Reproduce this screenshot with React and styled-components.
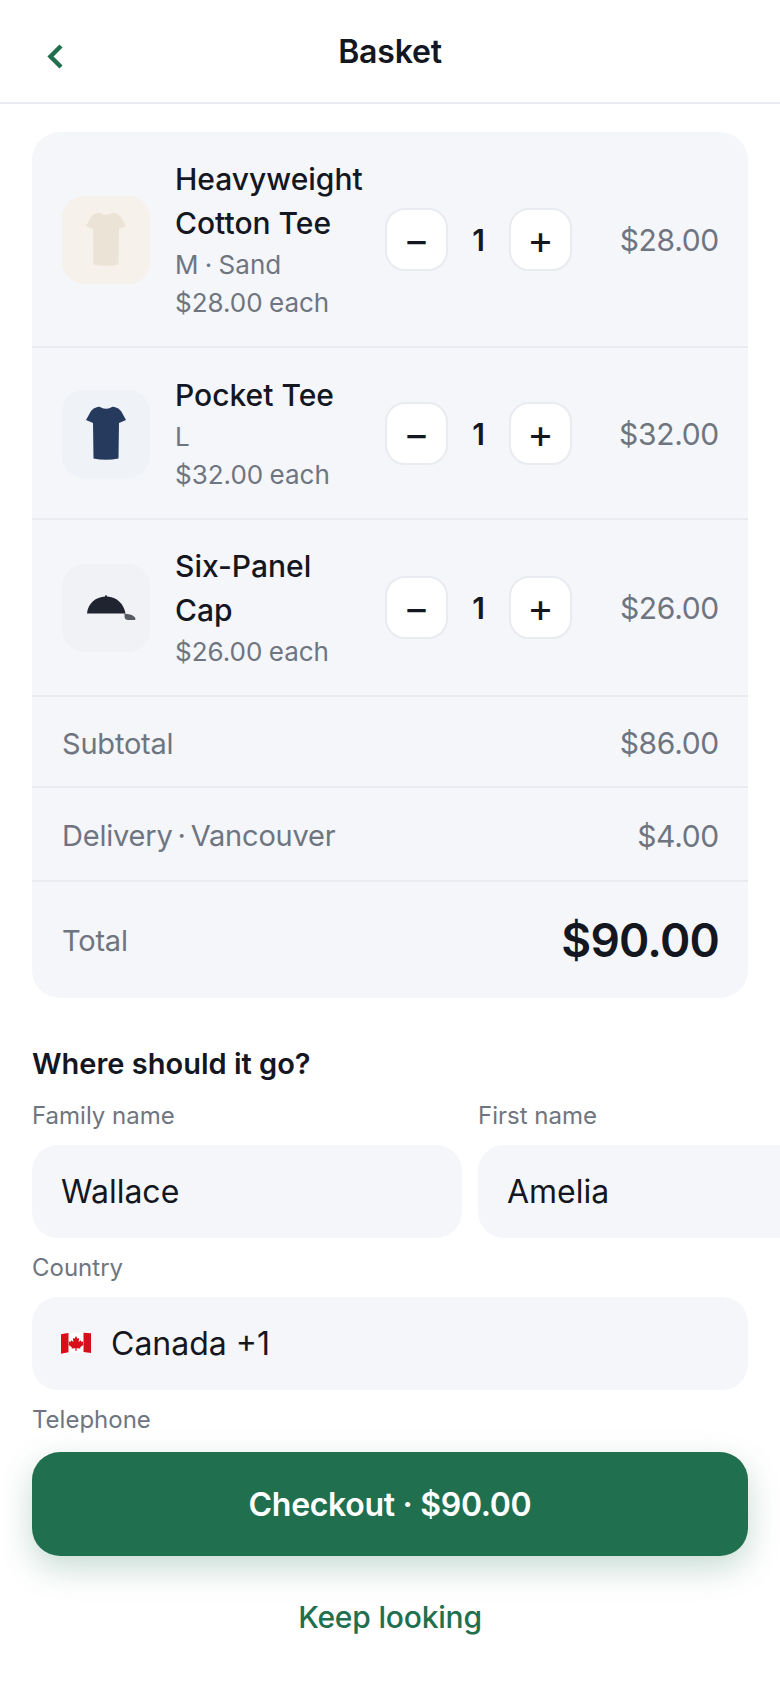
import React from 'react';
import styled, { createGlobalStyle } from 'styled-components';

const GlobalStyle = createGlobalStyle`
  * { box-sizing: border-box; }
  html, body { margin: 0; padding: 0; background: #fff; }
  body { font-family: Inter, "Liberation Sans", sans-serif; color: #14171f; }
`;

const GREEN = '#20704f';
const GRAY = '#6f7580';
const LINE = '#e8ebef';

const Screen = styled.div`
  position: relative;
  width: 780px;
  height: 1688px;
  overflow: hidden;
  background: #fff;
`;

const Header = styled.header`
  position: relative;
  height: 104px;
  padding-top: 2px;
  display: flex;
  align-items: center;
  justify-content: center;
  border-bottom: 2px solid ${LINE};
`;

const BackButton = styled.button`
  position: absolute;
  left: 45px;
  top: 41px;
  width: 20px;
  height: 30px;
  padding: 0;
  border: none;
  background: none;
  color: ${GREEN};
`;

const Title = styled.h1`
  margin: 0;
  font-size: 32px;
  line-height: 40px;
  letter-spacing: -0.2px;
  font-weight: 600;
`;

const Main = styled.main`
  padding: 28px 32px 0;
`;

const Card = styled.section`
  background: #f4f6fa;
  border-radius: 28px;
`;

const ItemRow = styled.div`
  display: flex;
  align-items: center;
  padding: 25px 29px 24px 30px;
  border-bottom: 2px solid ${LINE};

  &:nth-child(3) {
    padding-top: 24px;
  }
`;

const Thumb = styled.div`
  flex: none;
  width: 88px;
  height: 88px;
  border-radius: 22px;
  display: flex;
  align-items: center;
  justify-content: center;
  background: ${(p) => p.$bg};
`;

const Info = styled.div`
  flex: none;
  width: 196px;
  margin-left: 25px;
`;

const Name = styled.div`
  margin-bottom: 1px;
  font-size: 30px;
  line-height: 44px;
  font-weight: 500;
`;

const Meta = styled.div`
  font-size: 26px;
  line-height: 38px;
  word-spacing: -1px;
  color: ${GRAY};
`;

const Stepper = styled.div`
  flex: none;
  display: flex;
  align-items: center;
  margin-left: 14px;
`;

const StepButton = styled.button`
  width: 63px;
  height: 63px;
  padding: 0;
  border: 2px solid ${LINE};
  border-radius: 20px;
  background: #fff;
  color: #14171f;
  font-family: inherit;
  font-size: 40px;
  font-weight: 400;
  line-height: 1;
`;

const Qty = styled.span`
  width: 61px;
  text-align: center;
  font-size: 30px;
  font-weight: 600;
`;

const Amount = styled.span`
  font-size: 30px;
  letter-spacing: -0.3px;
  color: ${GRAY};
`;

const LinePrice = styled(Amount)`
  flex: 1;
  text-align: right;
`;

const SummaryRow = styled.div`
  display: flex;
  align-items: center;
  justify-content: space-between;
  padding: ${(p) => (p.$last ? 0 : 3)}px 29px 0 30px;
  height: ${(p) => p.$h}px;
  font-size: 29px;
  letter-spacing: -0.2px;
  word-spacing: -3px;
  color: ${GRAY};
  border-bottom: ${(p) => (p.$last ? 'none' : `2px solid ${LINE}`)};
`;

const TotalValue = styled.span`
  font-size: 46px;
  letter-spacing: -0.8px;
  font-weight: 600;
  color: #14171f;
`;

const SectionTitle = styled.h2`
  margin: 44px 0 0;
  font-size: 29px;
  line-height: 44px;
  font-weight: 600;
`;

const FieldRow = styled.div`
  display: grid;
  grid-template-columns: 430px 430px;
  gap: 16px;
`;

const Field = styled.div`
  margin-top: 12px;
`;

const FieldLabel = styled.label`
  display: block;
  font-size: 24px;
  line-height: 36px;
  color: ${GRAY};
`;

const InputShell = styled.div`
  display: flex;
  align-items: center;
  gap: 20px;
  height: 93px;
  margin-top: 11px;
  padding: 0 29px;
  border-radius: 26px;
  background: #f4f6fa;
`;

const TextInput = styled.input`
  flex: 1;
  min-width: 0;
  width: 100%;
  padding: 0;
  border: none;
  outline: none;
  background: none;
  font-family: inherit;
  font-size: 32px;
  color: #14171f;
`;

const Footer = styled.footer`
  position: absolute;
  left: 0;
  right: 0;
  bottom: 0;
  padding: 22px 32px 0;
  height: 258px;
  background: linear-gradient(to bottom, rgba(255, 255, 255, 0), #fff 20px);
`;

const CheckoutButton = styled.button`
  display: block;
  width: 716px;
  height: 104px;
  padding: 0;
  border: none;
  border-radius: 28px;
  background: ${GREEN};
  color: #fff;
  font-family: inherit;
  font-size: 32px;
  letter-spacing: -0.3px;
  font-weight: 600;
  box-shadow: 0 12px 32px rgba(31, 111, 78, 0.25);
`;

const KeepLooking = styled.button`
  display: block;
  width: 100%;
  margin-top: 39px;
  padding: 0;
  border: none;
  background: none;
  color: ${GREEN};
  font-family: inherit;
  font-size: 30px;
  letter-spacing: -0.2px;
  line-height: 44px;
  font-weight: 500;
`;

const Chevron = () => (
  <svg width="20" height="30" viewBox="0 0 20 30" fill="none">
    <path d="M16 5 L5.5 15.5 L16 26" stroke="currentColor" strokeWidth="4.4" strokeLinejoin="miter" />
  </svg>
);

const Tee = ({ color }) => (
  <svg width="40" height="55" viewBox="0 0 40 55">
    <path
      fill={color}
      d="M11.5 1 Q14 0.5 15 1.5 Q20 4 25 1.5 Q26 0.5 28.5 1 Q33 2 35 5 L40 14 L33 17 L32.5 52.5 Q20 55 7.5 52.5 L7 17 L0 14 L5 5 Q7 2 11.5 1 Z"
    />
  </svg>
);

const Cap = () => (
  <svg width="60" height="25" viewBox="-11 0 60 25">
    <path fill="#1f2430" d="M0 18.5 C1 8 9 2 18 1.5 L18 0.5 L20 0.5 L20 1.5 C30 2 37 9 38.5 18.5 Z" />
    <path fill="#565b64" d="M37.5 18.5 L43 19.5 Q48 21 48.5 24 L48 25 L41 25 Q37.5 25 37.5 21 Z" />
  </svg>
);

const CanadaFlag = () => (
  <svg width="30" height="23" viewBox="0 0 32 24">
    <path fill="#fff" d="M0 2 Q16 -1 32 1 V22 Q16 20 0 23 Z" />
    <path fill="#d80f1a" d="M0 2 Q4 1.2 8 .8 V21.2 Q4 21.8 0 23 Z" />
    <path fill="#d80f1a" d="M24 .4 Q28 .5 32 1 V22 Q28 21.4 24 21 Z" />
    <path
      fill="#d80f1a"
      d="M16 4 L17.6 7 L19.4 6.2 L18.8 10.4 L21 8.6 L21.6 10.2 L24 9.8 L23.2 12.6 L24.2 13.2 L20.4 16 L20.8 17.4 L16.6 17 L16.6 20 L15.4 20 L15.4 17 L11.2 17.4 L11.6 16 L7.8 13.2 L8.8 12.6 L8 9.8 L10.4 10.2 L11 8.6 L13.2 10.4 L12.6 6.2 L14.4 7 Z"
    />
  </svg>
);

const items = [
  { name: 'Heavyweight Cotton Tee', meta: ['M · Sand', '$28.00 each'], price: '$28.00', bg: '#f6f1ea', art: <Tee color="#ebe3d5" /> },
  { name: 'Pocket Tee', meta: ['L', '$32.00 each'], price: '$32.00', bg: '#eff2f6', art: <Tee color="#263a5e" /> },
  { name: 'Six-Panel Cap', meta: ['$26.00 each'], price: '$26.00', bg: '#f0f2f5', art: <Cap /> },
];

export default function App() {
  return (
    <Screen>
      <GlobalStyle />
      <Header>
        <BackButton aria-label="Back"><Chevron /></BackButton>
        <Title>Basket</Title>
      </Header>
      <Main>
        <Card>
          {items.map((item) => (
            <ItemRow key={item.name}>
              <Thumb $bg={item.bg}>{item.art}</Thumb>
              <Info>
                <Name>{item.name}</Name>
                {item.meta.map((m) => <Meta key={m}>{m}</Meta>)}
              </Info>
              <Stepper>
                <StepButton>−</StepButton>
                <Qty>1</Qty>
                <StepButton>+</StepButton>
              </Stepper>
              <LinePrice>{item.price}</LinePrice>
            </ItemRow>
          ))}
          <SummaryRow $h={91}><span>Subtotal</span><Amount>$86.00</Amount></SummaryRow>
          <SummaryRow $h={94}><span>Delivery · Vancouver</span><Amount>$4.00</Amount></SummaryRow>
          <SummaryRow $h={116} $last><span>Total</span><TotalValue>$90.00</TotalValue></SummaryRow>
        </Card>

        <SectionTitle>Where should it go?</SectionTitle>
        <FieldRow>
          <Field>
            <FieldLabel>Family name</FieldLabel>
            <InputShell><TextInput defaultValue="Wallace" /></InputShell>
          </Field>
          <Field>
            <FieldLabel>First name</FieldLabel>
            <InputShell><TextInput defaultValue="Amelia" /></InputShell>
          </Field>
        </FieldRow>
        <Field>
          <FieldLabel>Country</FieldLabel>
          <InputShell><CanadaFlag /><TextInput defaultValue="Canada +1" /></InputShell>
        </Field>
        <Field>
          <FieldLabel>Telephone</FieldLabel>
          <InputShell><TextInput /></InputShell>
        </Field>
      </Main>
      <Footer>
        <CheckoutButton>Checkout · $90.00</CheckoutButton>
        <KeepLooking>Keep looking</KeepLooking>
      </Footer>
    </Screen>
  );
}
